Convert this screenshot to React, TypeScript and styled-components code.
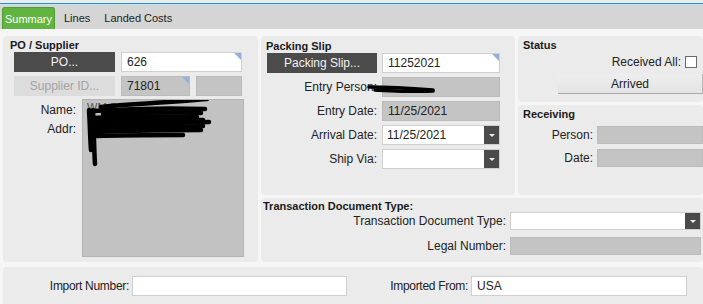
import React from 'react';
import styled, { createGlobalStyle, css } from 'styled-components';

const GlobalStyle = createGlobalStyle`
  html, body {
    margin: 0;
    padding: 0;
    background: #f6f6f6;
  }
  body {
    font-family: "Liberation Sans", Arial, sans-serif;
    font-size: 12px;
    color: #222;
  }
`;

const Screen = styled.div`
  width: 703px;
  height: 304px;
  overflow: hidden;
  background: #f6f6f6;
`;

const TopEdge = styled.div`
  height: 3px;
  background: #ececec;
  border-bottom: 1px solid #2b8fd1;
`;

const TabBar = styled.div`
  height: 25px;
  box-sizing: border-box;
  border-top: 1px solid #bfe6f5;
  background: #d5d5d5;
  display: flex;
  align-items: flex-end;
  gap: 4px;
  padding-left: 2px;
`;

const Tab = styled.div<{ $active?: boolean }>`
  height: 22px;
  box-sizing: border-box;
  padding: 0 5px;
  display: flex;
  align-items: center;
  font-size: 11px;
  color: #222;

  ${(p) =>
    p.$active &&
    css`
      width: 53px;
      justify-content: center;
      padding: 0;
      background: #62b440;
      border: 1px solid #4f9e2f;
      border-bottom: none;
      border-radius: 3px 3px 0 0;
      color: #fff;
    `}
`;

const Content = styled.div`
  padding: 7px 0 0 3px;
`;

const PanelGrid = styled.div`
  display: grid;
  grid-template-columns: 255px 254px 1fr;
  grid-template-rows: 66px 90px 64px;
  gap: 3px;
`;

const Panel = styled.div<{ $col: string; $row: string }>`
  grid-column: ${(p) => p.$col};
  grid-row: ${(p) => p.$row};
  position: relative;
  background: #ebebeb;
  border-radius: 4px;
  box-sizing: border-box;
  overflow: hidden;
`;

const POPanel = styled(Panel)`
  padding: 3px 0 0 7px;
`;

const SlipPanel = styled(Panel)`
  padding: 3px 0 0 5px;
`;

const StatusPanel = styled(Panel)`
  padding: 3px 0 0 5px;
`;

const TransPanel = styled(Panel)`
  padding: 2px 0 0 2px;
`;

const Title = styled.div`
  font-size: 11px;
  font-weight: bold;
  line-height: 12px;
  height: 12px;
  color: #1a1a1a;
`;

const SlipTitle = styled(Title)`
  height: 14px;
  line-height: 14px;
`;

const FieldGrid = styled.div<{ $cols: string; $rows: number; $gap: number }>`
  display: grid;
  grid-template-columns: ${(p) => p.$cols};
  grid-auto-rows: ${(p) => p.$rows}px;
  column-gap: 5px;
  row-gap: ${(p) => p.$gap}px;
`;

const POGrid = styled(FieldGrid)`
  margin: 1px 0 0 4px;
  column-gap: 6px;
`;

const SlipGrid = styled(FieldGrid)`
  margin-left: 1px;
`;

const PairBox = styled.div`
  display: flex;
  gap: 6px;
`;

const ActionButton = styled.div<{ $disabled?: boolean }>`
  display: flex;
  align-items: center;
  justify-content: center;
  font-size: 12px;
  background: ${(p) => (p.$disabled ? '#dcdcdc' : '#4b4b4b')};
  color: ${(p) => (p.$disabled ? '#a3a3a3' : '#f2f2f2')};
`;

const Label = styled.div`
  display: flex;
  align-items: center;
  justify-content: flex-end;
  font-size: 12px;
  color: #222;
  white-space: nowrap;
`;

const Input = styled.div<{ $gray?: boolean; $corner?: boolean; $w?: number }>`
  position: relative;
  box-sizing: border-box;
  ${(p) => (p.$w ? `width: ${p.$w}px;` : 'width: 100%;')}
  height: 100%;
  display: flex;
  align-items: center;
  padding: 0 5px;
  font-size: 12px;
  color: #222;
  background: ${(p) => (p.$gray ? '#c4c4c4' : '#fff')};
  border: 1px solid ${(p) => (p.$gray ? '#bbbbbb' : '#cfcfcf')};

  ${(p) =>
    p.$corner &&
    css`
      &::after {
        content: '';
        position: absolute;
        top: 0;
        right: 0;
        border-style: solid;
        border-width: 0 7px 7px 0;
        border-color: transparent #93b2d6 transparent transparent;
      }
    `}
`;

const Select = styled.div`
  display: flex;
  height: 100%;
  box-sizing: border-box;
  background: #fff;
  border: 1px solid #cfcfcf;
`;

const SelectValue = styled.div`
  flex: 1;
  display: flex;
  align-items: center;
  padding: 0 4px;
  font-size: 12px;
`;

const DropButton = styled.div`
  width: 15px;
  background: #4a4a4a;
  display: flex;
  align-items: center;
  justify-content: center;

  &::before {
    content: '';
    border-style: solid;
    border-width: 3px 3px 0 3px;
    border-color: #eee transparent transparent transparent;
  }
`;

const AddressArea = styled.div`
  display: flex;
  gap: 6px;
  margin: 3px 0 0 4px;
`;

const AddressLabels = styled.div`
  width: 62px;
  display: flex;
  flex-direction: column;
  align-items: flex-end;
  padding-top: 2px;
  line-height: 19px;
  font-size: 12px;
`;

const AddressBox = styled.div`
  position: relative;
  width: 162px;
  height: 158px;
  box-sizing: border-box;
  background: #c2c2c2;
  border: 1px solid #b3b3b3;
  overflow: hidden;
`;

const AddressText = styled.div`
  padding: 1px 4px;
  font-size: 11px;
  color: #555;
  line-height: 12px;
`;

const Scribble = styled.svg<{ $left: number; $top: number }>`
  position: absolute;
  left: ${(p) => p.$left}px;
  top: ${(p) => p.$top}px;
  overflow: visible;
  pointer-events: none;
`;

const CheckRow = styled.div`
  display: flex;
  justify-content: flex-end;
  align-items: center;
  gap: 4px;
  height: 12px;
  margin-top: 5px;
  padding-right: 6px;
  font-size: 12px;
`;

const CheckBox = styled.div`
  width: 12px;
  height: 12px;
  box-sizing: border-box;
  background: #fff;
  border: 1px solid #6a6a6a;
`;

const FlatButton = styled.div`
  height: 20px;
  margin: 6px 0 0 35px;
  box-sizing: border-box;
  display: flex;
  align-items: center;
  justify-content: center;
  font-size: 12px;
  color: #222;
  background: linear-gradient(#eeeeee, #e3e3e3);
  border-bottom: 1px solid #a9a9a9;
  border-right: 1px solid #b9b9b9;
`;

const ReceivingGrid = styled(FieldGrid)`
  margin-top: 6px;
  column-gap: 4px;
`;

const TransGrid = styled(FieldGrid)`
  column-gap: 4px;
`;

const BottomPanel = styled.div`
  margin-top: 5px;
  height: 40px;
  background: #ebebeb;
  border-radius: 4px;
  box-sizing: border-box;
  padding-top: 9px;
  display: grid;
  grid-template-columns: 126px 215px 118px 216px;
  grid-template-rows: 20px;
  column-gap: 3px;
`;

const BottomLabel = styled(Label)`
  letter-spacing: -0.3px;
`;

// marker strokes that redact the supplier name and address
const addressStrokes = [
  'M18 7 C 50 4, 90 2, 124 -1',
  'M10 11 C 40 9, 90 8, 122 9',
  'M20 14 C 50 13, 90 12, 118 13',
  'M8 18 C 40 17, 80 16, 114 17',
  'M14 21 C 50 20, 90 20, 120 20',
  'M10 25 C 40 24, 90 23, 126 22',
  'M12 28 C 50 27, 90 27, 120 26',
  'M10 32 C 40 31, 80 30, 118 30',
  'M14 36 C 40 35, 70 35, 100 35',
  'M10 10 C 11 30, 11 50, 12 64',
  'M6 10 C 7 25, 7 38, 8 50',
];

const App: React.FC = () => {
  return (
    <Screen>
      <GlobalStyle />
      <TopEdge />
      <TabBar>
        <Tab $active>Summary</Tab>
        <Tab>Lines</Tab>
        <Tab>Landed Costs</Tab>
      </TabBar>

      <Content>
        <PanelGrid>
          <POPanel $col="1" $row="1 / 4">
            <Title>PO / Supplier</Title>
            <POGrid $cols="101px 121px" $rows={20} $gap={4}>
              <ActionButton>PO...</ActionButton>
              <Input $corner>626</Input>
              <ActionButton $disabled>Supplier ID...</ActionButton>
              <PairBox>
                <Input $gray $corner $w={69}>71801</Input>
                <Input $gray $w={46} />
              </PairBox>
            </POGrid>
            <AddressArea>
              <AddressLabels>
                <span>Name:</span>
                <span>Addr:</span>
              </AddressLabels>
              <AddressBox>
                <AddressText>WM S</AddressText>
                <Scribble $left={0} $top={0} width="162" height="158">
                  {addressStrokes.map((d) => (
                    <path key={d} d={d} fill="none" stroke="#000" strokeWidth="4.5" strokeLinecap="round" />
                  ))}
                </Scribble>
              </AddressBox>
            </AddressArea>
          </POPanel>

          <SlipPanel $col="2" $row="1 / 3">
            <SlipTitle>Packing Slip</SlipTitle>
            <SlipGrid $cols="110px 118px" $rows={20} $gap={4}>
              <ActionButton>Packing Slip...</ActionButton>
              <Input $corner>11252021</Input>
              <Label>Entry Person:</Label>
              <Input $gray />
              <Label>Entry Date:</Label>
              <Input $gray>11/25/2021</Input>
              <Label>Arrival Date:</Label>
              <Select>
                <SelectValue>11/25/2021</SelectValue>
                <DropButton />
              </Select>
              <Label>Ship Via:</Label>
              <Select>
                <SelectValue />
                <DropButton />
              </Select>
            </SlipGrid>
            <Scribble $left={106} $top={49} width="70" height="10">
              <path d="M2 2 C 20 2, 40 3, 66 5" fill="none" stroke="#000" strokeWidth="3.5" strokeLinecap="round" />
              <path d="M8 5 C 30 6, 50 7, 66 6" fill="none" stroke="#000" strokeWidth="3.5" strokeLinecap="round" />
            </Scribble>
          </SlipPanel>

          <StatusPanel $col="3" $row="1">
            <Title>Status</Title>
            <CheckRow>
              <span>Received All:</span>
              <CheckBox />
            </CheckRow>
            <FlatButton>Arrived</FlatButton>
          </StatusPanel>

          <StatusPanel $col="3" $row="2">
            <Title>Receiving</Title>
            <ReceivingGrid $cols="70px 1fr" $rows={18} $gap={5}>
              <Label>Person:</Label>
              <Input $gray />
              <Label>Date:</Label>
              <Input $gray />
            </ReceivingGrid>
          </StatusPanel>

          <TransPanel $col="2 / 4" $row="3">
            <Title>Transaction Document Type:</Title>
            <TransGrid $cols="243px 191px" $rows={18} $gap={7}>
              <Label>Transaction Document Type:</Label>
              <Select>
                <SelectValue />
                <DropButton />
              </Select>
              <Label>Legal Number:</Label>
              <Input $gray />
            </TransGrid>
          </TransPanel>
        </PanelGrid>

        <BottomPanel>
          <BottomLabel>Import Number:</BottomLabel>
          <Input />
          <BottomLabel>Imported From:</BottomLabel>
          <Input>USA</Input>
        </BottomPanel>
      </Content>
    </Screen>
  );
};

export default App;
